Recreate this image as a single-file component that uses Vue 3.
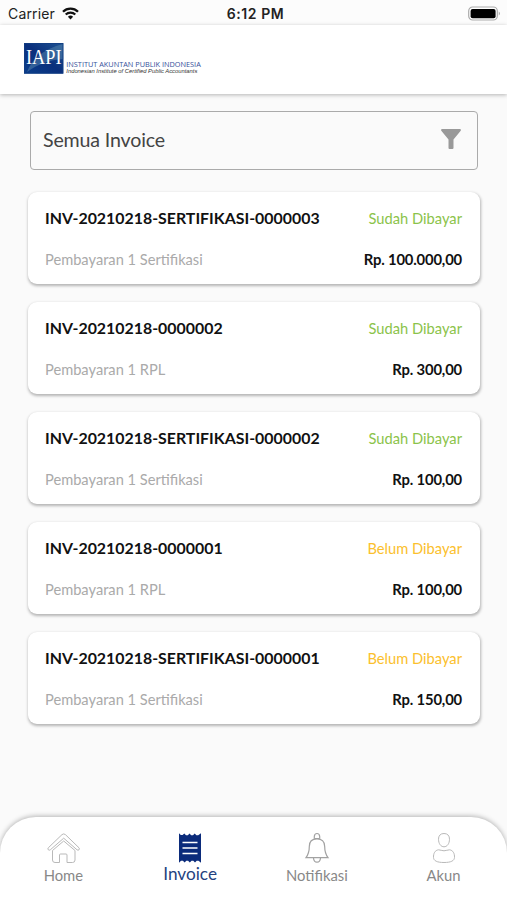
<script setup>
const invoices = [
  { id: 'INV-20210218-SERTIFIKASI-0000003', item: 'Pembayaran 1 Sertifikasi', paid: true, total: 'Rp. 100.000,00' },
  { id: 'INV-20210218-0000002', item: 'Pembayaran 1 RPL', paid: true, total: 'Rp. 300,00' },
  { id: 'INV-20210218-SERTIFIKASI-0000002', item: 'Pembayaran 1 Sertifikasi', paid: true, total: 'Rp. 100,00' },
  { id: 'INV-20210218-0000001', item: 'Pembayaran 1 RPL', paid: false, total: 'Rp. 100,00' },
  { id: 'INV-20210218-SERTIFIKASI-0000001', item: 'Pembayaran 1 Sertifikasi', paid: false, total: 'Rp. 150,00' },
]
</script>

<template>
  <div class="screen">
    <div class="status">
      <div class="carrier">
        <span>Carrier</span>
        <svg width="17" height="13" viewBox="0 0 17 13">
          <path d="M1 4.7a10.6 10.6 0 0 1 15 0" fill="none" stroke="#111" stroke-width="2.3" />
          <path d="M3.7 7.6a6.8 6.8 0 0 1 9.6 0" fill="none" stroke="#111" stroke-width="2.1" />
          <path d="M8.5 12.5 5.9 9.8a3.7 3.7 0 0 1 5.2 0z" fill="#111" />
        </svg>
      </div>
      <span class="time">6:12 PM</span>
      <div class="battery">
        <svg width="34" height="16" viewBox="0 0 34 16">
          <rect x="1.7" y="1" width="28.6" height="13" rx="4" fill="#fff" stroke="#aaa" stroke-width="1.2" />
          <rect x="3.6" y="2.9" width="25" height="9.4" rx="2" fill="#000" />
          <path d="M31.8 5.5q2 2 0 4z" fill="#999" />
        </svg>
      </div>
    </div>

    <header class="header">
      <svg class="logo" width="200" height="40" viewBox="0 0 200 40">
        <defs>
          <linearGradient id="navy" x1="0" y1="1" x2="1" y2="0">
            <stop offset="0" stop-color="#0b3f8c" />
            <stop offset=".5" stop-color="#0a2f7c" />
            <stop offset="1" stop-color="#1f5493" />
          </linearGradient>
        </defs>
        <rect x="0" y="1" width="39.3" height="30.6" fill="url(#navy)" />
        <path d="M3 30C8 17 19 7 39.3 2v15C25 18 14 22 3 30z" fill="#5788ae" opacity=".5" />
        <rect x=".4" y="1.4" width="38.5" height="29.8" fill="none" stroke="#123e82" stroke-width=".8" />
        <text class="mark" x="2" y="22.3" textLength="35.5" lengthAdjust="spacingAndGlyphs">IAPI</text>
        <text class="org" x="42.3" y="25.3" textLength="134.5" lengthAdjust="spacingAndGlyphs">INSTITUT AKUNTAN PUBLIK INDONESIA</text>
        <text class="org-en" x="42.3" y="30.9" textLength="131" lengthAdjust="spacingAndGlyphs">Indonesian Institute of Certified Public Accountants</text>
      </svg>
    </header>

    <main class="content">
      <div class="filter">
        <span>Semua Invoice</span>
        <svg width="20" height="20" viewBox="0 0 20 20">
          <path d="M.8 0h18.4q1.2.5.5 1.7L12.5 10.5V19q-.1 1-1 1H8.5q-1 0-1-1v-8.5L.3 1.7Q-.4.5.8 0z" fill="#999" />
        </svg>
      </div>
      <article v-for="inv in invoices" :key="inv.id" class="card">
        <div class="row">
          <span class="number">{{ inv.id }}</span>
          <span class="state" :class="{ unpaid: !inv.paid }">{{ inv.paid ? 'Sudah Dibayar' : 'Belum Dibayar' }}</span>
        </div>
        <div class="row">
          <span class="item">{{ inv.item }}</span>
          <span class="total">{{ inv.total }}</span>
        </div>
      </article>
    </main>

    <nav class="tabs">
      <div class="tab">
        <svg width="34" height="32" viewBox="0 0 34 32" fill="none" stroke="#b9b9b9" stroke-width="1">
          <path d="M2.3 15.8 16 2.6q1.700-1.400 3.400 0L33 15.8q.9 1.100 0 2-1 .8-2 0L17.7 6.2 4.300 17.800q-1 .8-2 0-.9-.9 0-2z" />
          <path d="M6.500 18.500V28q0 2.500 2.500 2.500h4.500V23q0-1 1-1h5.500q1 0 1 1v7.500h5.500q2.500 0 2.500-2.500v-9.500L17.700 9z" />
        </svg>
        <span>Home</span>
      </div>
      <div class="tab active">
        <svg width="34" height="32" viewBox="0 0 34 32">
          <path d="M6 1.200 7.800 3H9.600L11.300 1.400 13 3.200h1.800l1.700-1.700 1.700 1.700H20l1.700-1.700 1.700 1.700h1.800L28 1.200v29.600l-2.500-2h-1.800L22 30.500l-1.700-1.700h-1.800l-1.700 1.700-1.700-1.700h-1.800l-1.700 1.700-1.700-1.700H8l-2 2z" fill="#0b2b7b" />
          <path d="M9.500 10.500h15M9.500 16h15M9.500 21.500h15" stroke="#fff" stroke-width="1.600" />
        </svg>
        <span>Invoice</span>
      </div>
      <div class="tab">
        <svg width="34" height="32" viewBox="0 0 34 32" fill="none" stroke="#a2a2a2" stroke-width="1.200">
          <path d="M14.300 6.800V4.500Q14.500 1.500 17 1.500t2.700 3v2.300" />
          <path d="M14.300 6.500h5.400M9.300 14.500C9.300 9 12.500 6.900 17 6.900s7.700 2.100 7.700 7.600c0 5 .6 7.500 3.300 11.200H6c2.700-3.700 3.300-6.200 3.300-11.200z" />
          <path d="M13.500 26q.3 4.200 3.500 4.200t3.500-4.200" />
        </svg>
        <span>Notifikasi</span>
      </div>
      <div class="tab">
        <svg width="34" height="32" viewBox="0 0 34 32" fill="none" stroke="#b9b9b9" stroke-width="1">
          <path d="M17 1.500c3.600 0 5.600 2.200 5.500 5.800-.1 4.300-2.300 7.500-5.500 7.500s-5.400-3.200-5.500-7.500C11.400 3.700 13.400 1.500 17 1.500z" />
          <path d="M11.500 17.800c2 0 3.300 1 5.500 1s3.500-1 5.500-1c3.500.4 5.200 3.700 5 7.700-.2 3.300-3.500 5-10.500 5s-10.300-1.700-10.500-5c-.2-4 1.500-7.300 5-7.700z" />
        </svg>
        <span>Akun</span>
      </div>
    </nav>
  </div>
</template>

<style>
body {
  background: #fafafa;
}
</style>

<style scoped>
.screen {
  display: flex;
  flex-direction: column;
  width: 507px;
  height: 900px;
  overflow: hidden;
  background: #fafafa;
  font-family: Lato, sans-serif;
}
.status {
  display: grid;
  grid-template-columns: 1fr auto 1fr;
  align-items: center;
  flex: none;
  height: 25px;
  padding: 2px 6px 0 8px;
  box-sizing: border-box;
  background: #fcfcfc;
  color: #222;
  font-family: Inter, sans-serif;
  font-size: 14px;
  line-height: 20px;
}
.carrier {
  display: flex;
  align-items: center;
  gap: 7px;
  letter-spacing: 0.15px;
}
.time {
  padding-left: 2px;
  font-weight: 600;
  letter-spacing: 0.55px;
}
.battery {
  display: flex;
  justify-content: flex-end;
}
.header {
  flex: none;
  height: 69px;
  padding: 17px 24px 0;
  box-sizing: border-box;
  background: #fff;
  box-shadow: 0 1px 4px rgba(0, 0, 0, 0.28);
}
.logo {
  display: block;
}
.mark {
  fill: #fff;
  font: 20px "Liberation Serif", serif;
}
.org {
  fill: #35509a;
  font: 8px "Open Sans", sans-serif;
}
.org-en {
  fill: #333;
  font: italic 5.2px "Liberation Sans", sans-serif;
}
.content {
  display: flex;
  flex-direction: column;
  flex: 1;
  gap: 18px;
  padding: 17px 27px 0 28px;
}
.filter {
  display: flex;
  align-items: center;
  justify-content: space-between;
  height: 59px;
  margin: 0 2px 4px;
  padding: 0 16px 3px 12px;
  box-sizing: border-box;
  border: 1px solid #aaa;
  border-radius: 4px;
  color: #444;
  font-size: 19.6px;
  letter-spacing: -0.15px;
}
.card {
  display: flex;
  flex-direction: column;
  gap: 21px;
  height: 92px;
  padding: 16px 18px 0 17px;
  box-sizing: border-box;
  border-radius: 9px;
  background: #fff;
  box-shadow: 0.5px 1.5px 3px rgba(0, 0, 0, 0.28);
}
.row {
  display: flex;
  align-items: center;
  justify-content: space-between;
  height: 20px;
  line-height: 20px;
  white-space: nowrap;
}
.number {
  color: #111;
  font-size: 15.9px;
  font-weight: 700;
}
.state {
  color: #8bc34a;
  font-size: 14.7px;
}
.state.unpaid {
  color: #fbc02d;
}
.item {
  padding-top: 2px;
  color: #aaa;
  font-size: 14.65px;
}
.total {
  color: #111;
  font-size: 14.8px;
  font-weight: 700;
  letter-spacing: -0.16px;
}
.tabs {
  display: grid;
  grid-template-columns: repeat(4, 1fr);
  flex: none;
  height: 83px;
  padding-top: 15px;
  box-sizing: border-box;
  border-radius: 36px 36px 0 0;
  background: #fff;
  box-shadow: 0 -1px 5px rgba(0, 0, 0, 0.28);
}
.tab {
  display: flex;
  flex-direction: column;
  align-items: center;
  gap: 1px;
  color: #888;
  font-size: 14.8px;
  line-height: 20px;
}
.tab.active {
  gap: 0;
  color: #24427f;
  font-size: 17.2px;
}
</style>
